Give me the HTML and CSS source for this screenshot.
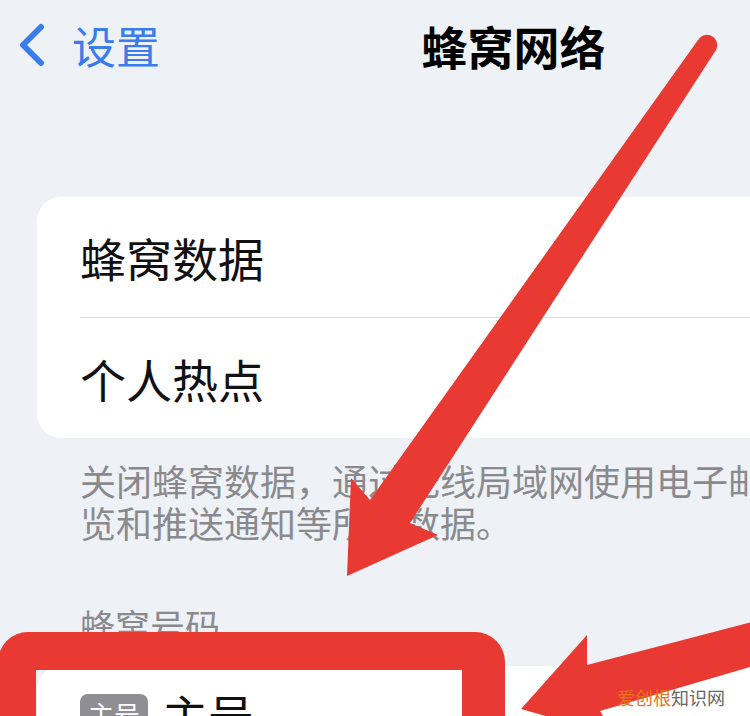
FILE: index.html
```html
<!DOCTYPE html>
<html lang="zh-CN">
<head>
  <meta charset="UTF-8">
  <meta name="viewport" content="width=device-width, initial-scale=1">
  <title>蜂窝网络</title>
  <link rel="stylesheet" href="styles.css">
</head>
<body>
  <div class="screen">
    <div class="nav">
      <a class="nav-back">
        <svg class="chevron" width="28" height="44" viewBox="0 0 28 44">
          <path d="M23 4 L5 22 L23 40" fill="none" stroke="currentColor" stroke-width="6" stroke-linecap="round" stroke-linejoin="round"/>
        </svg>
        <span>设置</span>
      </a>
      <div class="nav-title">蜂窝网络</div>
      <div></div>
    </div>

    <div class="group">
      <div class="row">蜂窝数据</div>
      <div class="sep"></div>
      <div class="row">个人热点</div>
    </div>
    <p class="group-footer">关闭蜂窝数据，通过无线局域网使用电子邮件、网页浏览和推送通知等所有数据。</p>

    <div class="group-header">蜂窝号码</div>
    <div class="group group-sim">
      <div class="row row-sim">
        <span class="badge">主号</span>
        <span>主号</span>
      </div>
    </div>
  </div>

  <!-- annotations drawn over the screenshot -->
  <div class="mark-box"></div>
  <svg class="mark-arrows" width="750" height="716" viewBox="0 0 750 716">
    <circle cx="707" cy="45" r="10.3"/>
    <path d="M698 40 L370 500 L351 478 L347 576 L438 535 L410 523 L716 50 Z"/>
    <path d="M760 620 L587 665 L587 635 L521 709 L616 736 L600 711 L760 664 Z"/>
  </svg>
  <div class="watermark"><span class="wm-a">爱创根</span><span class="wm-b">知识网</span></div>
</body>
</html>
```

FILE: styles.css
```css
* {
  margin: 0;
  padding: 0;
  box-sizing: border-box;
}

body {
  font-family: "Noto Sans CJK SC", "Noto Sans", sans-serif;
  background: #eef1f5;
  color: #111;
  width: 750px;
  height: 716px;
  overflow: hidden;
  position: relative;
}

/* the real screen is wider than the crop */
.screen {
  width: 1027px;
}

/* Navigation bar */
.nav {
  display: grid;
  grid-template-columns: 1fr auto 1fr;
  align-items: center;
  margin-top: 18px;
  height: 54px;
}
.nav-back {
  display: flex;
  align-items: center;
  gap: 26px;
  padding-left: 18px;
  color: #3a7cec;
  font-size: 44px;
  line-height: 54px;
}
.chevron {
  display: block;
}
.nav-title {
  font-size: 46px;
  font-weight: 700;
  line-height: 54px;
  color: #000;
}

/* Grouped list */
.group {
  margin: 125px 37px 0;
  background: #fff;
  border-radius: 24px;
}
.row {
  height: 120px;
  display: flex;
  align-items: center;
  padding-left: 43px;
  font-size: 46px;
  color: #111;
}
.sep {
  height: 1px;
  margin-left: 43px;
  background: #dcdce0;
}
.group-footer {
  margin: 21px 0 0 80px;
  width: 866px;
  font-size: 36px;
  line-height: 42px;
  color: #8a8a8e;
}
.group-header {
  margin-top: 61px;
  padding-left: 80px;
  font-size: 35px;
  line-height: 42px;
  color: #8a8a8e;
}
.group-sim {
  margin-top: 20px;
  height: 160px;
}
.row-sim {
  height: auto;
  padding-top: 21px;
  gap: 14px;
  line-height: 54px;
}
.badge {
  background: #8e8e93;
  color: #fff;
  font-size: 26px;
  line-height: 40px;
  padding: 0 8px;
  border-radius: 8px;
}

/* Red annotations */
.mark-box {
  position: absolute;
  left: -2px;
  top: 632px;
  width: 507px;
  height: 160px;
  border: 38px solid #e83a33;
  border-right-width: 43px;
  border-radius: 30px;
}
.mark-arrows {
  position: absolute;
  left: 0;
  top: 0;
  fill: #e83a33;
}
.watermark {
  position: absolute;
  left: 617px;
  top: 685px;
  font-size: 18px;
  line-height: 24px;
}
.wm-a {
  color: #e8731f;
}
.wm-b {
  color: #666;
}
```
